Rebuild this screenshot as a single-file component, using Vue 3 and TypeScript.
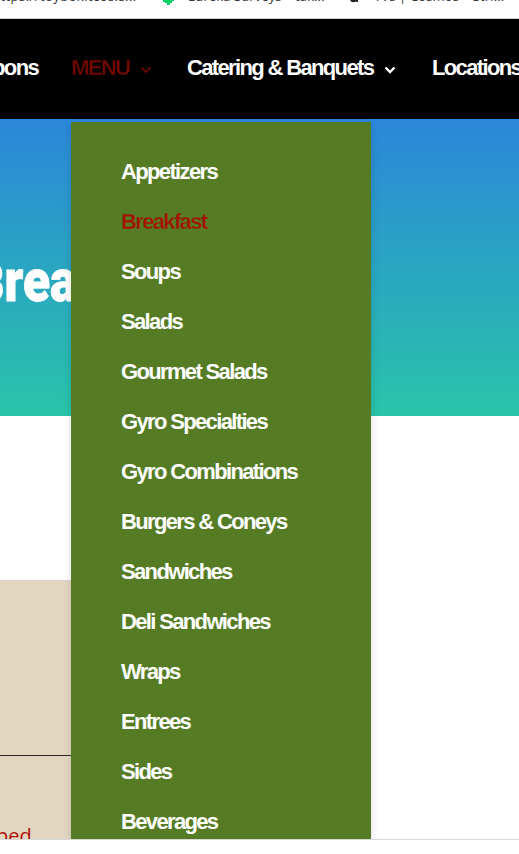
<script setup lang="ts">
const bookmarks: { id: string; text: string }[] = [
  { id: 'site', text: 'https://toyboxitcos.s...' },
  { id: 'surveys', text: 'Eureka Surveys – tak...' },
  { id: 'cosmos', text: 'TVs | Cosmos – Stri...' },
]
const items: string[] = [
  'Appetizers', 'Breakfast', 'Soups', 'Salads', 'Gourmet Salads', 'Gyro Specialties',
  'Gyro Combinations', 'Burgers & Coneys', 'Sandwiches', 'Deli Sandwiches', 'Wraps',
  'Entrees', 'Sides', 'Beverages',
]
const current = 'Breakfast'
</script>

<template>
  <div class="window">
    <div class="bookmarks">
      <span v-for="b in bookmarks" :key="b.id" class="bookmark" :class="b.id">
        <svg v-if="b.id === 'surveys'" class="leaf" viewBox="0 0 12 12"><path d="M0 0h12v8h-2v2H8v2H5v-2H3V9H1V7H0z" fill="#08d466" /></svg>
        <svg v-if="b.id === 'cosmos'" class="mark" viewBox="0 0 10 12"><path d="M1 6h4v3h4v2H7.500l-.8-.6q-1 .8-3 .8Q1 11 1 8z" fill="#222" /></svg>
        <span class="label">{{ b.text }}</span>
      </span>
    </div>
    <div class="page">
      <nav class="nav">
        <a class="link coupons">Coupons</a>
        <a class="link menu active">MENU
          <svg class="chev" viewBox="0 0 12 8"><path d="M1.500 1.500 6 6l4.500-4.500" /></svg>
        </a>
        <a class="link catering">Catering &amp; Banquets
          <svg class="chev" viewBox="0 0 12 8"><path d="M1.500 1.500 6 6l4.500-4.500" /></svg>
        </a>
        <a class="link locations">Locations</a>
      </nav>
      <header class="hero"><h1 class="title"><span class="initial">B</span>reakfast</h1></header>
      <section class="card">
        <div class="card-head"></div>
        <p class="card-text">ped</p>
      </section>
      <ul class="dropdown">
        <li v-for="item in items" :key="item" class="item" :class="{ current: item === current }">{{ item }}</li>
      </ul>
    </div>
  </div>
</template>

<style>
body { margin: 0; background: #fff; }
</style>

<style scoped>
.window { width: 519px; height: 854px; overflow: hidden; background: #fff; font-family: "Liberation Sans", Arial, sans-serif; }
.bookmarks { position: relative; height: 18px; overflow: hidden; border-bottom: 1px solid #d5d5d5; font: 13px/18px "Open Sans", "Noto Sans", sans-serif; color: #333; }
.bookmark { position: absolute; top: -13px; display: flex; white-space: nowrap; }
.site { left: -8px; letter-spacing: .45px; }
.surveys { left: 162px; letter-spacing: .1px; }
.cosmos { left: 349px; letter-spacing: .15px; }
.leaf { width: 12px; height: 12px; margin: 6px 14px 0 0; }
.mark { width: 10px; height: 12px; margin: 4px 15px 0 0; }
.page { position: relative; height: 820px; overflow: hidden; border-bottom: 1px solid #d8d8d8; }
.nav { position: relative; display: flex; align-items: center; height: 98px; padding-bottom: 2px; background: #000; }
.link { display: flex; align-items: center; flex: none; color: #fff; font-size: 22px; font-weight: 700; letter-spacing: -1.65px; line-height: 26px; white-space: nowrap; }
.coupons { margin-left: -43px; width: 81px; justify-content: flex-end; }
.menu { margin-left: 33px; width: 116px; }
.catering { width: 245px; }
.active { color: #780900; -webkit-text-stroke: .5px #000; }
.chev { width: 12px; height: 8px; margin: 4px 0 0 11px; fill: none; stroke: currentColor; stroke-width: 2.4; }
.active .chev { stroke-width: 1.7; }
.hero { height: 297px; overflow: hidden; background: linear-gradient(#2b87da, #29c4a9); }
.title { margin: 127px 0 0 -29px; width: 400px; transform: scaleX(.83); transform-origin: 27px 0; color: #fff; font: 900 60px/70px Roboto, sans-serif; white-space: nowrap; -webkit-text-stroke: .8px #fff; }
.initial { font-size: 54px; }
.card { margin-top: 164px; width: 350px; height: 259px; background: #e2d6c1; }
.card-head { height: 174px; border-top: 1px solid #d8d5d0; border-bottom: 1px solid #2d2b28; }
.card-text { margin: 66px 0 0 -4px; color: #ad1006; font: 400 20px/28px "Open Sans", sans-serif; }
.dropdown { position: absolute; left: 71px; top: 103px; width: 300px; height: 730px; box-sizing: border-box; margin: 0; padding: 25px 50px; list-style: none; background: #557c25; box-shadow: 0 2px 8px rgba(0,0,0,.14); }
.item { height: 50px; line-height: 50px; color: #fff; font-size: 22px; font-weight: 700; letter-spacing: -1.65px; white-space: nowrap; }
.current { color: #a50e02; -webkit-text-stroke: .4px #557c25; }
</style>
